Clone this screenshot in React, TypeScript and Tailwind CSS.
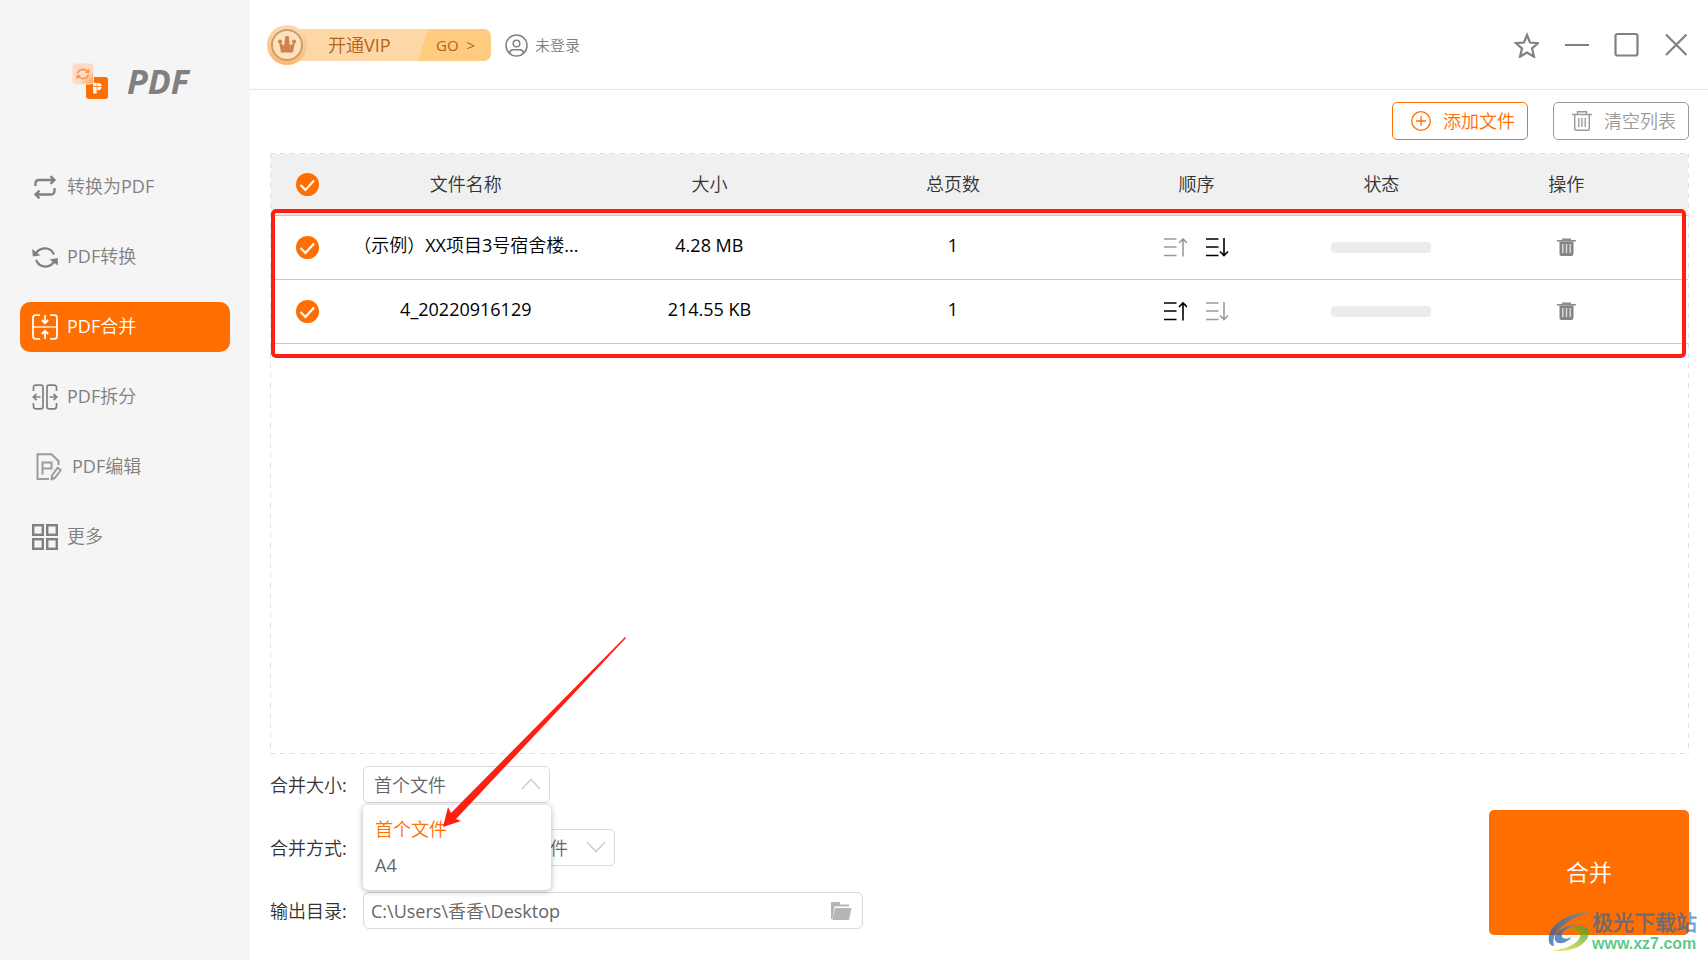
import React, { useState } from 'react';

interface FileRow {
    id: number;
    name: string;
    size: string;
    pages: number;
}

const FILES: FileRow[] = [
    { id: 1, name: '（示例）XX项目3号宿舍楼...', size: '4.28 MB', pages: 1 },
    { id: 2, name: '4_20220916129', size: '214.55 KB', pages: 1 },
];

const NAV = [
    { label: '转换为PDF', icon: ToPdfIcon },
    { label: 'PDF转换', icon: ConvertIcon },
    { label: 'PDF合并', icon: MergeIcon, active: true },
    { label: 'PDF拆分', icon: SplitIcon },
    { label: 'PDF编辑', icon: EditIcon, inset: true },
    { label: '更多', icon: MoreIcon },
];

function ToPdfIcon() {
    return (
        <svg viewBox="0 0 26 26" className="w-[26px] h-[26px]" fill="none" stroke="currentColor" strokeWidth="2.300">
            <path d="M3.500 12V9.500Q3.500 6 7 6H22M18.500 2.200L22.500 6L18.500 9.800" />
            <path d="M22.500 14v2.500Q22.500 20.500 19 20.500H4M7.500 16.700L3.500 20.500L7.500 24.300" />
        </svg>
    );
}

function ConvertIcon() {
    return (
        <svg viewBox="0 0 26 26" className="w-[26px] h-[26px]" fill="none" stroke="currentColor" strokeWidth="2.200">
            <path d="M3.500 10C7 3.500 18 1.500 22 10.500" />
            <path d="M22.500 16.500C19 24.500 8 25 4 16" />
            <path d="M0.200 5L0.800 12.500L8.300 11.500Z" fill="currentColor" stroke="none" />
            <path d="M25.800 21.500V14L17.500 15.500Z" fill="currentColor" stroke="none" />
        </svg>
    );
}

function MergeIcon() {
    return (
        <svg viewBox="0 0 26 26" className="w-[26px] h-[26px]" fill="none" stroke="currentColor" strokeWidth="1.800">
            <path d="M8 1.200H3.500Q1 1.200 1 3.700V22.300Q1 24.800 3.500 24.800H8" />
            <path d="M18 1.200H22.500Q25 1.200 25 3.700V22.300Q25 24.800 22.500 24.800H18" />
            <path d="M1 13H25" strokeWidth="1.300" />
            <path d="M13 1V9M9.800 6L13 9.200L16.200 6" />
            <path d="M13 25V17M9.800 20L13 16.800L16.200 20" />
        </svg>
    );
}

function SplitIcon() {
    return (
        <svg viewBox="0 0 26 26" className="w-[26px] h-[26px]" fill="none" stroke="currentColor" strokeWidth="1.700">
            <path d="M1.500 7V3.500Q1.500 1.200 3.800 1.200H9Q11 1.200 11 3.500V22.500Q11 24.800 9 24.800H3.800Q1.500 24.800 1.500 22.500V19" />
            <path d="M24.500 7V3.500Q24.500 1.200 22.200 1.200H17Q15 1.200 15 3.500V22.500Q15 24.800 17 24.800H22.200Q24.500 24.800 24.500 22.500V19" />
            <path d="M8.500 13H1.500M4.500 9.800L1.300 13L4.500 16.200" />
            <path d="M17.500 13H24.500M21.500 9.800L24.700 13L21.500 16.200" />
        </svg>
    );
}

function EditIcon() {
    return (
        <svg viewBox="0 0 26 28" className="w-[26px] h-[28px]" fill="none" stroke="#9c9c9c" strokeWidth="2">
            <path d="M13 26H1.500V1.200H15.500L22.500 8V12" />
            <path d="M6.500 21.500V9.500H15.500V15.500H6.500" />
            <path d="M15.500 26.500L16 22.500L21.500 14.800L24.800 17L19.300 24.500Z" strokeLinejoin="round" />
        </svg>
    );
}

function MoreIcon() {
    return (
        <svg viewBox="0 0 26 26" className="w-[26px] h-[26px]" fill="none" stroke="currentColor" strokeWidth="2.400">
            <rect x="1.200" y="1.200" width="9.600" height="9.600" />
            <rect x="15.200" y="1.200" width="9.600" height="9.600" />
            <rect x="1.200" y="15.200" width="9.600" height="9.600" />
            <rect x="15.200" y="15.200" width="9.600" height="9.600" />
        </svg>
    );
}

function Logo() {
    return (
        <svg viewBox="0 0 36 36" className="w-9 h-9" fill="none">
            <defs>
                <linearGradient id="glass" x1="0" y1="0" x2="1" y2="1">
                    <stop offset="0.6" stopColor="#fbdcc6" />
                    <stop offset="1" stopColor="#ff9a4d" />
                </linearGradient>
            </defs>
            <rect x="14" y="14" width="22" height="22" rx="3" fill="#ff6e00" />
            <rect x="0.500" y="0.500" width="21" height="20.500" rx="3.500" fill="url(#glass)" stroke="#fde6d6" />
            <path d="M5.500 10.500C6.500 6 12.500 5 15.500 8.500M16.500 11.500C15.500 16 9.500 17 6.500 13.500" stroke="#ff9248" strokeWidth="1.600" />
            <path d="M17.500 5.500V10H13ZM4.500 16.500V12H9Z" fill="#ff9248" />
            <path d="M23 30.500V25M21 21.500H25.500Q28 21.500 28 23.500T25.500 25.500H21" stroke="#fff" strokeWidth="3.400" />
            <path d="M20.500 23.500H31M25 18.500V28" stroke="#ff6e00" strokeWidth="0.700" />
        </svg>
    );
}

function CrownBadge() {
    return (
        <svg viewBox="0 0 40 40" className="relative z-10 w-10 h-10">
            <defs>
                <linearGradient id="ring" x1="0" y1="0" x2="0" y2="1">
                    <stop offset="0" stopColor="#fbd9b5" />
                    <stop offset="1" stopColor="#fdb96c" />
                </linearGradient>
            </defs>
            <circle cx="20" cy="20" r="20" fill="url(#ring)" />
            <circle cx="20" cy="20" r="15" fill="#fce3bd" stroke="#d09a6c" strokeWidth="2" />
            <path d="M14 27.500L12 17L17 20.500L18 14H22L23 20.500L28 17L26 27.500Z" fill="#cf8450" />
            <circle cx="13" cy="16.500" r="2.100" fill="#cf8450" />
            <circle cx="20" cy="13" r="2.200" fill="#cf8450" />
            <circle cx="27" cy="16.500" r="2.100" fill="#cf8450" />
        </svg>
    );
}

function OrderIcon({ down }: { down?: boolean }) {
    return (
        <svg viewBox="0 0 23 20" className="w-[23px] h-5" fill="none" stroke="currentColor" strokeWidth="1.600">
            <path d="M0 2H12.500M0 10H12.500M0 18.500H12.500" />
            {down ? (
                <path d="M18 1V18.500M14 14.500L18 18.500L22 14.500" />
            ) : (
                <path d="M19 19.500V2M15 6L19 2L23 6" />
            )}
        </svg>
    );
}

function RowTrashIcon() {
    return (
        <svg viewBox="0 0 19 18" className="w-[19px] h-[18px]">
            <path d="M5 0.500H14V2H19V3.500H0V2H5Z" fill="#8c8c8c" />
            <path d="M2.500 3.500H16.500V16Q16.500 18 14.500 18H4.500Q2.500 18 2.500 16Z" fill="#858585" />
            <path d="M5.800 6V15M9.500 6V15M13.200 6V15" stroke="#d8d8d8" strokeWidth="1.500" />
        </svg>
    );
}

function CheckCircle({ label }: { label: string }) {
    return (
        <label className="relative block w-[23px] h-[23px] mx-auto">
            <input
                type="checkbox"
                defaultChecked
                aria-label={label}
                className="peer block w-[23px] h-[23px] appearance-none rounded-full border border-gray-300 checked:border-0 checked:bg-[#ff6e00]"
            />
            <svg
                viewBox="0 0 23 23"
                className="absolute inset-0 pointer-events-none opacity-0 peer-checked:opacity-100"
                fill="none"
                stroke="#fff"
                strokeWidth="2.200"
            >
                <path d="M4.500 12L9.500 17L18 7.500" />
            </svg>
        </label>
    );
}

function Sidebar() {
    return (
        <aside className="w-[250px] shrink-0 bg-[#f5f5f5] text-[#808080]">
            <div className="flex items-center gap-[19px] h-[162px] pl-[72px]">
                <Logo />
                <h1 className="text-[34px] leading-9 font-bold italic">PDF</h1>
            </div>
            <nav className="flex flex-col gap-5 px-5">
                {NAV.map(({ label, icon: Icon, active, inset }) => (
                    <a
                        key={label}
                        href="#"
                        className={`flex items-center h-[50px] rounded-[10px] text-[18px] ${
                            inset ? 'gap-[10px] pl-4' : 'gap-[9px] pl-3'
                        } ${active ? 'bg-[#ff6e00] text-white' : ''}`}
                    >
                        <Icon />
                        <span className="pb-0.5">{label}</span>
                    </a>
                ))}
            </nav>
        </aside>
    );
}

function TopBar() {
    return (
        <header className="flex items-center justify-between h-[90px] pl-[17px] pr-[19px] pt-px border-b border-[#e6e6e6]">
            <div className="flex items-center">
                <button className="flex items-center text-[#b5621b]">
                    <CrownBadge />
                    <span className="flex h-8 w-[204px] -ml-5 rounded-r-[7px] overflow-hidden bg-[linear-gradient(108deg,#fed7a7_66%,#ffcb7f_66%)]">
                        <span className="flex-1 flex items-center pl-[41px] text-[18px]">开通VIP</span>
                        <span className="flex items-center pr-4 text-[15px]">GO &nbsp;&gt;</span>
                    </span>
                </button>
                <a href="#" className="flex items-center gap-[7px] ml-[14px] text-[15px] text-[#808080]">
                    <svg viewBox="0 0 23 23" className="w-[23px] h-[23px]" fill="none" stroke="currentColor" strokeWidth="1.500">
                        <circle cx="11.500" cy="11.500" r="10.500" />
                        <circle cx="11.500" cy="9.500" r="3.300" />
                        <path d="M4.500 19Q5 15.800 8 15.800H15Q18 15.800 18.500 19" />
                    </svg>
                    未登录
                </a>
            </div>
            <div className="flex items-center gap-6 text-[#808080]">
                <button aria-label="收藏">
                    <svg viewBox="0 0 26 26" className="w-[26px] h-[26px]" fill="none" stroke="currentColor" strokeWidth="2.200">
                        <path d="M14 3L17 10.500L25 11.200L19 16.500L21 24.700L14 20.500L7 24.700L9 16.500L3 11.200L11 10.500Z" />
                    </svg>
                </button>
                <button aria-label="最小化">
                    <svg viewBox="0 0 26 26" className="w-[26px] h-[26px]" stroke="currentColor" strokeWidth="2">
                        <path d="M2 13H26" />
                    </svg>
                </button>
                <button aria-label="最大化">
                    <svg viewBox="0 0 26 26" className="w-[26px] h-[26px]" fill="none" stroke="currentColor" strokeWidth="2.200">
                        <rect x="2.500" y="2" width="22" height="21.500" rx="2" />
                    </svg>
                </button>
                <button aria-label="关闭">
                    <svg viewBox="0 0 26 26" className="w-[26px] h-[26px]" stroke="currentColor" strokeWidth="2.200">
                        <path d="M3 2.500L23.500 23M23.500 2.500L3 23" />
                    </svg>
                </button>
            </div>
        </header>
    );
}

function FileTable() {
    return (
        <div className="relative flex-1 p-px bg-no-repeat bg-[image:repeating-linear-gradient(90deg,#dedede_0_5px,transparent_5px_10px),repeating-linear-gradient(90deg,#dedede_0_5px,transparent_5px_10px),repeating-linear-gradient(#dedede_0_5px,transparent_5px_10px),repeating-linear-gradient(#dedede_0_5px,transparent_5px_10px)] [background-size:100%_1px,100%_1px,1px_100%,1px_100%] [background-position:0_0,0_100%,0_0,100%_0]">
            <table className="w-full table-fixed text-center text-[18px] leading-6">
                <colgroup>
                    <col className="w-[73px]" />
                    <col />
                    <col />
                    <col />
                    <col />
                    <col className="w-[126px]" />
                    <col />
                </colgroup>
                <thead>
                    <tr className="h-[61px] bg-[#f0f0f0] text-[#333] border-b border-[#c8c8c8]">
                        <th className="p-0"><CheckCircle label="全选" /></th>
                        <th className="p-0 font-normal">文件名称</th>
                        <th className="p-0 font-normal">大小</th>
                        <th className="p-0 font-normal">总页数</th>
                        <th className="p-0 font-normal">顺序</th>
                        <th className="p-0 font-normal">状态</th>
                        <th className="p-0 font-normal">操作</th>
                    </tr>
                </thead>
                <tbody>
                    {FILES.map((file, i) => {
                        const first = i === 0;
                        const last = i === FILES.length - 1;
                        return (
                            <tr key={file.id} className="h-16 text-black border-b border-[#c8c8c8]">
                                <td className="p-0"><CheckCircle label={file.name} /></td>
                                <td className="p-0 pb-1 whitespace-nowrap">{file.name}</td>
                                <td className="p-0 pb-1">{file.size}</td>
                                <td className="p-0 pb-1">{file.pages}</td>
                                <td className="p-0">
                                    <div className="flex justify-center gap-[19px]">
                                        <button aria-label="上移" disabled={first} className="disabled:text-[#9a9a9a]">
                                            <OrderIcon />
                                        </button>
                                        <button aria-label="下移" disabled={last} className="disabled:text-[#9a9a9a]">
                                            <OrderIcon down />
                                        </button>
                                    </div>
                                </td>
                                <td className="p-0">
                                    <div className="mx-auto w-[100px] h-[11px] rounded-[4px] bg-[#ececec]" />
                                </td>
                                <td className="p-0">
                                    <button aria-label="删除" className="block mx-auto">
                                        <RowTrashIcon />
                                    </button>
                                </td>
                            </tr>
                        );
                    })}
                </tbody>
            </table>
            {/* highlight frame */}
            <div className="absolute left-px right-[3px] top-14 h-[149px] border-4 border-[#ff1e12] rounded-[5px] pointer-events-none" />
        </div>
    );
}

function OutputForm() {
    const [size, setSize] = useState('首个文件');

    return (
        <div className="flex flex-col gap-[26px] mb-[6px] text-[18px] leading-6 text-[#333]">
            <div className="flex items-center">
                <label htmlFor="size" className="w-[93px]">合并大小:</label>
                <div className="relative w-[187px]">
                    <select
                        id="size"
                        value={size}
                        onChange={(e) => setSize(e.target.value)}
                        className="block w-full h-[37px] pl-[10px] appearance-none bg-white border border-[#d9d9d9] rounded-[5px] text-[#666]"
                    >
                        <option>首个文件</option>
                        <option>A4</option>
                    </select>
                    <svg viewBox="0 0 20 12" className="absolute right-[9px] top-3 w-5 h-3 pointer-events-none" fill="none" stroke="#d0d0d0" strokeWidth="1.600">
                        <path d="M1 11L10 1.500L19 11" />
                    </svg>
                    <ul role="listbox" className="absolute z-10 left-0 top-[39px] w-[188px] h-[85px] pt-[6px] rounded-[5px] bg-white shadow-[0_1px_6px_rgba(0,0,0,0.3)] text-[#666]">
                        {['首个文件', 'A4'].map((o) => (
                            <li
                                key={o}
                                role="option"
                                aria-selected={o === size}
                                onClick={() => setSize(o)}
                                className={`flex items-center h-9 pl-3 ${o === size ? 'text-[#ff6e00]' : ''}`}
                            >
                                {o}
                            </li>
                        ))}
                    </ul>
                </div>
            </div>
            <div className="flex items-center">
                <label htmlFor="mode" className="w-[93px]">合并方式:</label>
                <div className="relative w-[252px]">
                    <select
                        id="mode"
                        className="block w-full h-[37px] pr-[46px] appearance-none bg-white border border-[#d9d9d9] rounded-[5px] text-right text-[#666]"
                    >
                        <option>多个文件合成一个文件</option>
                    </select>
                    <svg viewBox="0 0 20 12" className="absolute right-[9px] top-3 w-5 h-3 pointer-events-none" fill="none" stroke="#d0d0d0" strokeWidth="1.600">
                        <path d="M1 1L10 10.500L19 1" />
                    </svg>
                </div>
            </div>
            <div className="flex items-center">
                <label htmlFor="dir" className="w-[93px]">输出目录:</label>
                <div className="flex items-center w-[500px] h-[37px] pl-[7px] pr-[10px] border border-[#d9d9d9] rounded-[6px] text-[#666]">
                    <input id="dir" type="text" defaultValue="C:\Users\香香\Desktop" className="flex-1 min-w-0 bg-transparent outline-none" />
                    <button aria-label="浏览">
                        <svg viewBox="0 0 21 18" className="w-[21px] h-[18px]" fill="#b5b5b5">
                            <path d="M0 0H8.500L9.500 2.500H18V4.500H3.500L1.500 17H0Z" />
                            <path d="M4 6H20.500L18 18H1.500Z" />
                        </svg>
                    </button>
                </div>
            </div>
        </div>
    );
}

function Watermark() {
    return (
        <div className="absolute right-[11px] bottom-[6px] flex items-center gap-[2px] pointer-events-none">
            <svg viewBox="0 0 42 40" className="w-[42px] h-10">
                <defs>
                    <linearGradient id="swirl" x1="0" y1="1" x2="1" y2="0">
                        <stop offset="0" stopColor="#1c4fa0" />
                        <stop offset="1" stopColor="#3a9ad0" />
                    </linearGradient>
                    <linearGradient id="leaf" x1="0" y1="1" x2="1" y2="0">
                        <stop offset="0" stopColor="#f2e63a" />
                        <stop offset="1" stopColor="#3c9a28" />
                    </linearGradient>
                </defs>
                <path d="M42 0C20 0 -2 14 1 30C2 33 4 34 6 34C2 21 18 7 42 0Z" fill="url(#swirl)" opacity="0.7" />
                <path d="M32 13C18 11 5 20 7 28C9 34 21 31 24 24C20 28 13 27 14 23C15 18 22 14 32 13Z" fill="url(#swirl)" opacity="0.7" />
                <path d="M20 17C30 12 41 13 41 21C40 33 22 42 3 38C18 38 31 31 32 24C32 19 27 17 20 17Z" fill="url(#leaf)" opacity="0.75" />
            </svg>
            <div className="flex flex-col">
                <span className="text-[21px] leading-6 font-bold text-[#0d67be]/60">极光下载站</span>
                <span className="text-[16px] leading-5 font-bold font-['Liberation_Sans',sans-serif] text-[#3fbf73]/85">www.xz7.com</span>
            </div>
        </div>
    );
}

export default function App() {
    return (
        <div className="relative flex min-h-screen bg-white font-['Open_Sans','Noto_Sans_CJK_SC_DemiLight','Noto_Sans_CJK_SC_Light','Noto_Sans_CJK_SC',sans-serif]">
            <Sidebar />
            <main className="flex-1 min-w-0 flex flex-col">
                <TopBar />
                <div className="flex-1 flex flex-col pl-5 pr-[19px] pt-3 pb-[25px]">
                    <div className="flex justify-end gap-[25px] mb-[13px] text-[18px]">
                        <button className="flex items-center justify-between w-[136px] h-[38px] pl-[18px] pr-3 border border-[#ff6e00] rounded-[5px] text-[#ff6e00]">
                            <svg viewBox="0 0 20 20" className="w-5 h-5" fill="none" stroke="currentColor" strokeWidth="1.300">
                                <circle cx="10" cy="10" r="9.300" />
                                <path d="M10 5V15M5 10H15" />
                            </svg>
                            添加文件
                        </button>
                        <button className="flex items-center justify-between w-[136px] h-[38px] pl-[18px] pr-3 border border-[#9a9a9a] rounded-[5px] text-[#9a9a9a]">
                            <svg viewBox="0 0 20 20" className="w-5 h-5" fill="none" stroke="currentColor" strokeWidth="1.400">
                                <path d="M0 3.500H20M5.500 3V0.700H14.500V3" />
                                <path d="M2.700 4V17.500Q2.700 19.300 4.500 19.300H15.500Q17.300 19.300 17.300 17.500V4" />
                                <path d="M6.800 7V16M10 7V16M13.200 7V16" />
                            </svg>
                            清空列表
                        </button>
                    </div>
                    <FileTable />
                    <div className="relative flex items-end justify-between mt-3">
                        <OutputForm />
                        <button className="w-[200px] h-[125px] rounded-[5px] bg-[#ff6e00] text-white text-[23px]">合并</button>
                        {/* pointer to the selected option */}
                        <svg viewBox="0 0 184 192" className="absolute z-20 left-[173px] bottom-[107px] w-[184px] h-48 pointer-events-none" fill="#ff1e12">
                            <path d="M0 191L5 171L8 177L182 1L183 2L13 183L18 185Z" />
                        </svg>
                    </div>
                </div>
            </main>
            <Watermark />
        </div>
    );
}
